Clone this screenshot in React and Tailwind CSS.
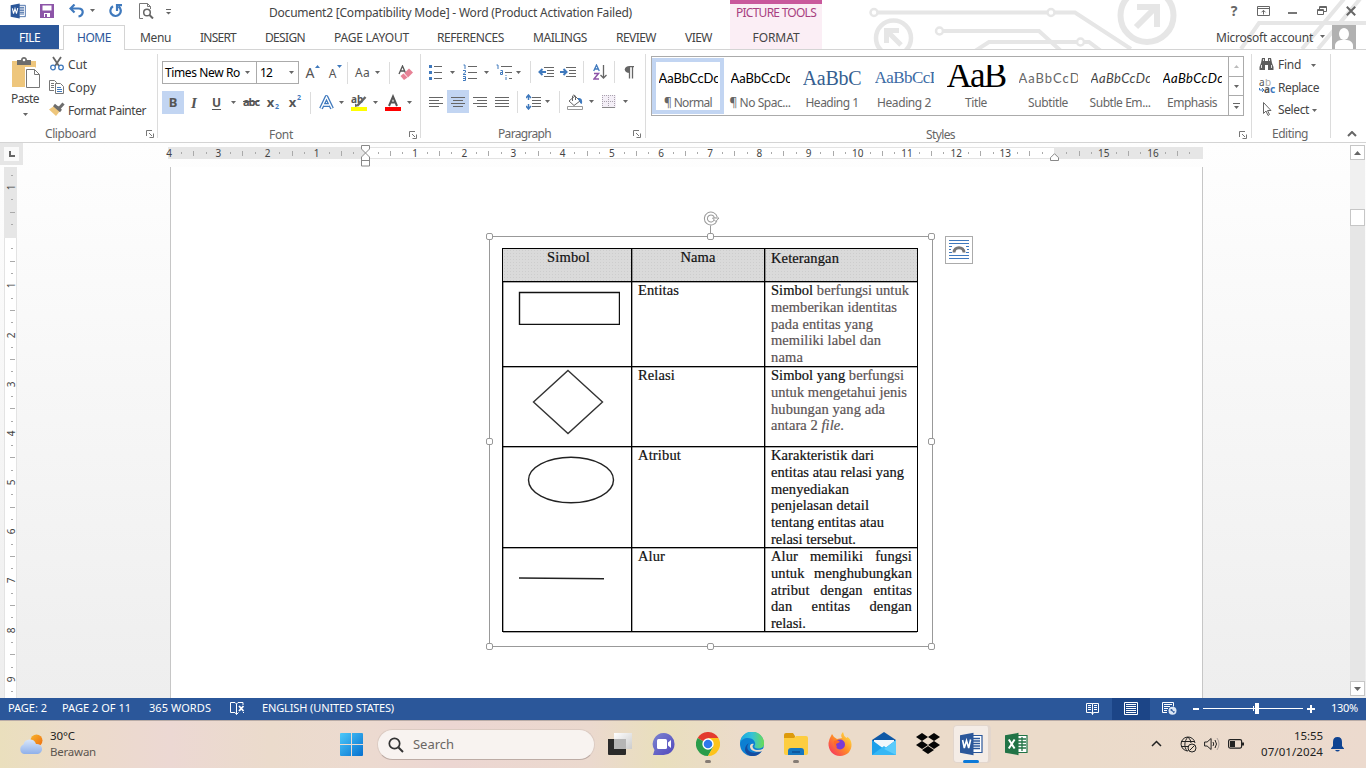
import React, { useLayoutEffect, useRef } from "react";

/* Single line of text whose tracking is adjusted to fill a given width. */
function T({ w, className = "", children }) {
  const ref = useRef(null);
  useLayoutEffect(() => {
    const el = ref.current;
    el.style.letterSpacing = "0px";
    const natural = el.getBoundingClientRect().width;
    el.style.letterSpacing = (w - natural) / el.textContent.length + "px";
  }, [w]);
  return (
    <span ref={ref} className={"inline-block shrink-0 whitespace-pre " + className}>
      {children}
    </span>
  );
}

const Arrow = ({ className = "" }) => (
  <svg className={"h-[3px] w-[5px] shrink-0 " + className} viewBox="0 0 5 3">
    <path d="M0 0h5L2.500 3z" fill="#666" />
  </svg>
);

const Sep = ({ className = "" }) => <div className={"h-[22px] w-px shrink-0 bg-[#dcdcdc] " + className} />;

function Svg({ w, h, className = "", children }) {
  return (
    <svg width={w} height={h} viewBox={`0 0 ${w} ${h}`} className={"shrink-0 " + className} fill="none">
      {children}
    </svg>
  );
}

const Lines = ({ rows, color = "#666" }) => (
  <g stroke={color} strokeWidth="1" shapeRendering="crispEdges">
    {rows.map(([x1, x2, y], i) => (
      <path key={i} d={`M${x1} ${y + 0.5}H${x2}`} />
    ))}
  </g>
);

const Launcher = ({ className = "" }) => (
  <Svg w={8} h={8} className={className}>
    <path d="M.5 6V.5H6M3 3l3 3M7.500 3.500v4h-4" stroke="#777" />
  </Svg>
);

function OfficeIcon({ size, letter, color }) {
  const excel = letter === "X";
  return (
    <svg width={size} height={size} viewBox="0 0 24 24" className="shrink-0" fill="none">
      <path d="M13 3.500h10v17H13z" fill="#fff" stroke={color} strokeWidth="1.200" />
      {excel ? (
        <path d="M14 7h8M14 10h8M14 13h8M14 16h8M18 5v14" stroke={color} strokeWidth="1.300" />
      ) : (
        <path d="M14 6.500h7M14 9h7M14 11.500h7M14 14h7M14 16.500h7" stroke={color} strokeWidth="1.300" />
      )}
      <path d="M1 3.300 14.500.8v22.400L1 20.700z" fill={color} />
      {excel ? (
        <path d="m4.800 7.500 5.800 9M10.600 7.500l-5.800 9" stroke="#fff" strokeWidth="2" />
      ) : (
        <path d="m3.600 8 1.700 8 2.200-7.500L9.700 16l1.900-8.500" stroke="#fff" strokeWidth="1.600" />
      )}
    </svg>
  );
}

function Circuit() {
  return (
    <svg className="absolute left-[866px] top-0 h-[49px] w-[500px]" viewBox="866 0 500 49" fill="none" stroke="#e6e6e6" strokeWidth="4">
      <circle cx="874" cy="12.500" r="3.500" strokeWidth="2.500" />
      <path d="M878 12.500h170M1055 12.500h20L1131 49" />
      <circle cx="1051" cy="12.500" r="3.500" strokeWidth="2.500" />
      <circle cx="939.500" cy="31" r="3.500" strokeWidth="2.500" />
      <path d="M943 31h96l22 20M975 51l14-9h88M1084 42h5l12 9" />
      <circle cx="1080.500" cy="42" r="3.500" strokeWidth="2.500" />
      <circle cx="893.500" cy="38" r="17.500" strokeWidth="4.500" />
      <path d="m901 45-14-14M886.500 43V30.500H899" strokeWidth="5" />
      <circle cx="1147" cy="15.500" r="26.500" fill="#fff" strokeWidth="6" />
      <path d="m1136 27 19-19M1137 7h20v20" strokeWidth="6" />
      <path d="m1241 49 18-26h107M1302 49l42-50M1318 49l42-50" />
    </svg>
  );
}

function TitleBar() {
  return (
    <div className="relative flex h-[25px] items-start">
      <div className="ml-[10px] mt-[3px] flex"><OfficeIcon size={16} letter="W" color="#2b579a" /></div>
      <Svg w={14} h={14} className="ml-[14px] mt-[4px]">
        <path d="M0 0h14v14H0z" fill="#8d55a8" />
        <path d="M2.500 1.500h9v5h-9zM4 9h6v4H4z" fill="#fff" />
        <path d="M5 10h2v4H5z" fill="#8d55a8" />
      </Svg>
      <Svg w={15} h={14} className="ml-[15px] mt-[4px]">
        <path d="M1 4.500h8.500c6 0 5.200 7 0 8M5.500.5l-4 4 4 4" stroke="#3f79bd" strokeWidth="2.200" />
      </Svg>
      <Arrow className="ml-[6px] mt-[9px]" />
      <Svg w={14} h={14} className="ml-[14px] mt-[4px]">
        <path d="M4 2.300a5.200 5.200 0 1 0 5.500.2M8 7V1.200h5" stroke="#3f79bd" strokeWidth="2.200" />
      </Svg>
      <Svg w={15} h={16} className="ml-[16px] mt-[3px]">
        <path d="M4 15.500H.5V.5h8l3 3V6M8.500.5v3h3" stroke="#777" />
        <circle cx="8" cy="9.500" r="3.300" stroke="#666" strokeWidth="1.500" />
        <path d="m10.500 12 3.500 3.500" stroke="#666" strokeWidth="2" />
      </Svg>
      <Svg w={6} h={6} className="ml-[12px] mt-[9px]">
        <path d="M0 .5h5" stroke="#666" /><path d="M0 3h5L2.500 5.500z" fill="#666" />
      </Svg>
      <T w={363} className="ml-[97px] mt-[3px] text-[12px] leading-[20px] text-[#444]">Document2 [Compatibility Mode] - Word (Product Activation Failed)</T>
      <div className="ml-[98px] flex h-[25px] w-[92px] shrink-0 justify-center border-t-4 border-[#c9589c] bg-[#fbeef5]">
        <T w={80} className="mt-[-1px] text-[12px] leading-[20px] text-[#a83e80]">PICTURE TOOLS</T>
      </div>
      <span className="ml-[408px] w-[8px] shrink-0 text-center font-['Noto_Sans'] text-[14px] font-bold leading-[22px] text-[#666]">?</span>
      <Svg w={13} h={10} className="ml-[19px] mt-[6px]">
        <path d="M.5.5h12v9H.5zM.5 2.500h12M6.500 8.500v-4M4.500 6.300l2-2 2 2" stroke="#666" />
      </Svg>
      <div className="ml-[18px] mt-[12px] h-[2px] w-[9px] shrink-0 bg-[#777]" />
      <Svg w={10} h={9} className="ml-[20px] mt-[6px]">
        <path d="M.5 3.500h6v5h-6zM.5 4.500h6M2.500 3V.5h7v5H7M2.500 1.500h7" stroke="#666" />
      </Svg>
      <Svg w={10} h={10} className="ml-[19px] mt-[6px]">
        <path d="m.8.800 8.400 8.400M9.200.8.800 9.200" stroke="#666" strokeWidth="2" />
      </Svg>
    </div>
  );
}

function Tabs() {
  const c = "text-[12px] leading-[26px] text-[#444] ";
  return (
    <div className="relative flex h-[25px] border-b border-[#d4d4d4]">
      <div className="flex w-[59px] justify-center bg-[#2b579a]"><T w={21} className="text-[12px] leading-[26px] text-white">FILE</T></div>
      <div className="ml-[4px] flex h-[25px] w-[62px] shrink-0 justify-center border border-b-0 border-[#d4d4d4] bg-white">
        <T w={34} className="text-[12px] leading-[24px] text-[#2b579a]">HOME</T>
      </div>
      <T w={31} className={c + "ml-[15px]"}>Menu</T>
      <T w={36} className={c + "ml-[29px]"}>INSERT</T>
      <T w={40} className={c + "ml-[29px]"}>DESIGN</T>
      <T w={75} className={c + "ml-[29px]"}>PAGE LAYOUT</T>
      <T w={67} className={c + "ml-[28px]"}>REFERENCES</T>
      <T w={54} className={c + "ml-[29px]"}>MAILINGS</T>
      <T w={40} className={c + "ml-[29px]"}>REVIEW</T>
      <T w={27} className={c + "ml-[29px]"}>VIEW</T>
      <div className="ml-[18px] flex h-[24px] w-[92px] shrink-0 justify-center bg-[#fbeef5]"><T w={47} className={c}>FORMAT</T></div>
      <T w={97} className={c + "ml-[394px]"}>Microsoft account</T>
      <Arrow className="ml-[7px] mt-[10px]" />
      <Svg w={24} h={24} className="ml-[7px]">
        <path d="M0 0h24v24H0z" fill="#b1b1b1" />
        <ellipse cx="12" cy="9" rx="5" ry="6" fill="#fff" />
        <path d="M3 24v-3c0-4 3-5.500 6-6h6c3 .5 6 2 6 6v3z" fill="#fff" />
      </Svg>
    </div>
  );
}

const label = "mt-[3px] text-[12px] leading-[16px] text-[#666] ";

function Clipboard() {
  const t = "text-[12px] leading-[18px] text-[#444] ";
  return (
    <div className="flex w-[157px] shrink-0 flex-col">
      <div className="flex h-[74px]">
        <div className="flex w-[50px] flex-col items-center">
          <Svg w={30} h={32} className="ml-[2px] mt-[7px]">
            <path d="M1 4h24v26H1z" fill="#eec67c" />
            <path d="M6 3h4c0-4 6-4 6 0h4v5H6z" fill="#6d6d6d" />
            <circle cx="13" cy="3" r="1.300" fill="#fff" />
            <path d="M14 10h10l6 6v16H14z" fill="#fff" />
            <path d="M15.500 12.500h8l5 5v13h-13zM23.500 12.500v5h5" fill="#fff" stroke="#777" />
          </Svg>
          <T w={28} className={t + "mt-px"}>Paste</T>
          <Arrow className="mt-[5px]" />
        </div>
        <div className="flex flex-col pt-[6px]">
          <div className="flex h-[23px] items-start">
            <Svg w={14} h={15} className="mr-[4px]">
              <path d="m3 1 6 9M11 1 5 10" stroke="#666" strokeWidth="1.800" />
              <circle cx="3" cy="11.500" r="2.300" stroke="#3f79bd" strokeWidth="1.300" />
              <circle cx="11" cy="11.500" r="2.300" stroke="#3f79bd" strokeWidth="1.300" />
            </Svg>
            <T w={19} className={t}>Cut</T>
          </div>
          <div className="flex h-[23px] items-start">
            <Svg w={15} h={14} className="mr-[4px] mt-[1px] -ml-px">
              <path d="M5 10.500H.5V.5h5l2 2V4M2 3.500h3M2 5.500h3M2 7.500h3" stroke="#777" />
              <path d="M6.500 3.500h5l3 3v7h-8z" fill="#fff" stroke="#777" />
              <path d="M8 7.500h4M8 9.500h5M8 11.500h5" stroke="#3f79bd" />
            </Svg>
            <T w={28} className={t}>Copy</T>
          </div>
          <div className="flex h-[20px] items-start">
            <Svg w={16} h={14} className="mr-[3px] -ml-px">
              <path d="M0 7.500 5 4l6 5-4 5z" fill="#eec67c" />
              <path d="m5 3 7 6M8 5l2 1.500 4.500-5" stroke="#6d6d6d" strokeWidth="3" />
            </Svg>
            <T w={78} className={t}>Format Painter</T>
          </div>
        </div>
      </div>
      <div className="flex items-start">
        <T w={51} className={label + "ml-[45px]"}>Clipboard</T>
        <Launcher className="ml-[50px] mt-[7px]" />
      </div>
    </div>
  );
}

const btn = "shrink-0 text-center font-['Noto_Sans'] text-[#555] ";

function FontGroup() {
  return (
    <div className="flex w-[262px] shrink-0 flex-col pl-[4px]">
      <div className="mt-[11px] flex h-[23px] items-center">
        <div className="flex h-[23px] w-[95px] shrink-0 items-center border border-[#ababab]">
          <T w={75} className="ml-[2px] text-[12px] leading-[20px] text-black">Times New Ro</T><Arrow className="ml-[5px]" />
        </div>
        <div className="-ml-px flex h-[23px] w-[43px] shrink-0 items-center border border-[#ababab]">
          <T w={12} className="ml-[3px] text-[12px] leading-[20px] text-black">12</T><Arrow className="ml-[17px]" />
        </div>
        <span className={btn + "ml-[6px] w-[10px] text-[14px] leading-[22px]"}>A</span>
        <svg className="mb-[12px] h-[3px] w-[5px]" viewBox="0 0 5 3"><path d="M0 3h5L2.500 0z" fill="#3f79bd" /></svg>
        <span className={btn + "ml-[8px] w-[9px] pt-[2px] text-[12px] leading-[20px]"}>A</span>
        <svg className="mb-[12px] h-[3px] w-[5px]" viewBox="0 0 5 3"><path d="M0 0h5L2.500 3z" fill="#3f79bd" /></svg>
        <Sep className="ml-[5px]" />
        <T w={15} className="ml-[7px] text-[12px] text-[#555]">Aa</T><Arrow className="ml-[5px]" />
        <Sep className="ml-[9px]" />
        <Svg w={15} h={16} className="ml-[8px]">
          <path d="m1 9 3.500-8L8 9M2.500 6h4" stroke="#555" strokeWidth="1.300" />
          <path d="m6.500 8 4.500-4.500 4 4-5 5z" fill="#e78296" /><path d="m2.500 11 3-2.500 4 4-3.500 2.500z" fill="#e78296" />
        </Svg>
      </div>
      <div className="mt-[7px] flex h-[23px] items-center">
        <span className={btn + "w-[22px] bg-[#c2d5f2] text-[13px] font-bold leading-[23px]"}>B</span>
        <span className="ml-[4px] w-[12px] text-center font-['Liberation_Serif'] text-[15px] font-bold italic leading-[20px] text-[#555]">I</span>
        <span className={btn + "ml-[11px] w-[11px] text-[12px] font-bold leading-[20px] underline underline-offset-2"}>U</span>
        <Arrow className="ml-[9px]" />
        <T w={16} className="ml-[7px] text-[11px] font-bold text-[#555] line-through">abc</T>
        <span className={btn + "ml-[7px] w-[9px] text-[13px] font-bold"}>x</span><span className="mt-[9px] w-[5px] text-[7px] font-bold text-[#3f79bd]">2</span>
        <span className={btn + "ml-[8px] w-[9px] text-[13px] font-bold"}>x</span><span className="mb-[9px] w-[5px] text-[7px] font-bold text-[#3f79bd]">2</span>
        <Sep className="ml-[8px]" />
        <Svg w={15} h={16} className="ml-[8px]">
          <path d="M2 13.500 7.500 2 13 13.500M4.500 10h6" stroke="#3f79bd" strokeWidth="4" strokeLinejoin="round" />
          <path d="M2 13.500 7.500 2 13 13.500M4.500 10h6" stroke="#fff" strokeWidth="1.400" />
        </Svg>
        <Arrow className="ml-[5px]" />
        <Svg w={17} h={17} className="ml-[7px]">
          <text x="0" y="9" fontSize="10" fontWeight="bold" fill="#555" fontFamily="Noto Sans">ab</text>
          <path d="m14.500 3-8 8.500" stroke="#666" strokeWidth="2.500" /><path d="M4 9.500 8 12l-4 1z" fill="#666" />
          <path d="M0 13h16v4H0z" fill="#ff0" />
        </Svg>
        <Arrow className="ml-[5px]" />
        <Svg w={16} h={17} className="ml-[7px]">
          <path d="M4 12 8 2.500 12 12M5.500 8.500h5" stroke="#555" strokeWidth="2" />
          <path d="M0 13h16v4H0z" fill="red" />
        </Svg>
        <Arrow className="ml-[6px]" />
      </div>
      <div className="mt-[10px] flex items-start">
        <T w={24} className={label + "ml-[107px]"}>Font</T>
        <Launcher className="ml-[116px] mt-[7px]" />
      </div>
    </div>
  );
}

function Paragraph() {
  return (
    <div className="flex w-[224px] shrink-0 flex-col pl-[8px]">
      <div className="mt-[11px] flex h-[23px] items-center">
        <Svg w={14} h={16}>
          <Lines rows={[[5, 13, 2], [5, 13, 8], [5, 13, 14]]} />
          <path d="M0 1h3v3H0zM0 7h3v3H0zM0 13h3v3H0z" fill="#3f79bd" />
        </Svg>
        <Arrow className="ml-[7px]" />
        <Svg w={15} h={17} className="ml-[8px]">
          <Lines rows={[[5, 14, 2], [5, 14, 8], [5, 14, 14]]} />
          <path d="M.5 1H2v4M0 6.500h2.500V8L0 10.500h3M0 12.500h2.500v4H0M0 14.500h2" stroke="#3f79bd" />
        </Svg>
        <Arrow className="ml-[6px]" />
        <Svg w={17} h={16} className="ml-[7px]">
          <Lines rows={[[5, 16, 2], [9, 16, 8], [13, 16, 14]]} />
          <path d="M.5 1H2v4M4.500 6.500h2v4h-2v-2h2M10 11v1M10 13v3" stroke="#3f79bd" />
        </Svg>
        <Arrow className="ml-[3px]" />
        <Sep className="ml-[9px]" />
        <Svg w={16} h={12} className="ml-[7px]">
          <Lines rows={[[6, 16, 1], [9, 16, 4], [9, 16, 7], [6, 16, 10]]} />
          <path d="M8 6H2M4.500 3 1.500 6l3 3" stroke="#3f79bd" strokeWidth="2" />
        </Svg>
        <Svg w={16} h={12} className="ml-[6px]">
          <Lines rows={[[6, 16, 1], [9, 16, 4], [9, 16, 7], [6, 16, 10]]} />
          <path d="M0 6h6M3.500 3l3 3-3 3" stroke="#3f79bd" strokeWidth="2" />
        </Svg>
        <Sep className="ml-[7px]" />
        <Svg w={14} h={16} className="ml-[9px]">
          <path d="M.7 7 3.500 1l2.800 6M1.500 5h4" stroke="#3f79bd" strokeWidth="1.300" />
          <path d="M1 9.500h4.500L1 15h5" stroke="#8d55a8" strokeWidth="1.500" />
          <path d="M10.500 1v13M7.500 11l3 3 3-3" stroke="#666" strokeWidth="1.300" />
        </Svg>
        <Sep className="ml-[7px]" />
        <Svg w={11} h={13} className="ml-[9px]">
          <path d="M5 .5h5M5.500 0v12.500M8.500 0v12.500" stroke="#666" strokeWidth="1.300" /><path d="M6 0v7C-1 7-1 0 6 0z" fill="#666" />
        </Svg>
      </div>
      <div className="mt-[7px] flex h-[23px] items-center">
        <Svg w={14} h={12}><Lines rows={[[0, 14, 1], [0, 10, 4], [0, 14, 7], [0, 10, 10]]} /></Svg>
        <div className="ml-[4px] flex h-[23px] w-[22px] items-center justify-center bg-[#c2d5f2]">
          <Svg w={14} h={12}><Lines rows={[[0, 14, 1], [2, 12, 4], [0, 14, 7], [2, 12, 10]]} /></Svg>
        </div>
        <Svg w={14} h={12} className="ml-[4px]"><Lines rows={[[0, 14, 1], [4, 14, 4], [0, 14, 7], [4, 14, 10]]} /></Svg>
        <Svg w={14} h={12} className="ml-[8px]"><Lines rows={[[0, 14, 1], [0, 14, 4], [0, 14, 7], [0, 14, 10]]} /></Svg>
        <Sep className="ml-[8px]" />
        <Svg w={15} h={16} className="ml-[8px]">
          <Lines rows={[[6, 15, 3], [6, 15, 6], [6, 15, 9], [6, 15, 12]]} />
          <path d="M2.500 1v5M2.500 15v-5M0 4l2.500-3L5 4M0 12l2.500 3L5 12" stroke="#3f79bd" strokeWidth="1.500" />
        </Svg>
        <Arrow className="ml-[4px]" />
        <Sep className="ml-[9px]" />
        <Svg w={17} h={16} className="ml-[7px]">
          <path d="m2 7 6-5 5 5-6 4.500zM5.500 7V2q1-2 3 0v4" stroke="#666" />
          <path d="M11 4q5-1 4 6l-2-1q0-3-2-3z" fill="#3f79bd" />
          <path d="M.5 12.500h15v3H.5z" fill="#fff" stroke="#999" />
        </Svg>
        <Arrow className="ml-[5px]" />
        <Svg w={14} h={14} className="ml-[8px]">
          <path d="M0 0h14v13H0z" fill="#f4eff7" />
          <path d="M.5 0v13M6.500 0v13M12.500 0v13M0 .5h13M0 6.500h13" stroke="#a9a2ad" strokeDasharray="1 1" />
          <path d="M0 12.500h13" stroke="#888" />
        </Svg>
        <Arrow className="ml-[7px]" />
      </div>
      <div className="mt-[10px] flex items-start">
        <T w={53} className={label + "ml-[69px]"}>Paragraph</T>
        <Launcher className="ml-[82px] mt-[7px]" />
      </div>
    </div>
  );
}

const calibri = "font-['Lato'] text-[13px] leading-[20px] ";
const cambria = "font-['Liberation_Serif'] ";
const styles = [
  { name: "¶ Normal", nw: 48, s: "AaBbCcDc", w: 61, c: calibri + "text-black", on: true },
  { name: "¶ No Spac...", nw: 61, s: "AaBbCcDc", w: 61, c: calibri + "text-black" },
  { name: "Heading 1", nw: 53, s: "AaBbC", w: 59, c: cambria + "text-[20px] leading-[20px] text-[#365f91]" },
  { name: "Heading 2", nw: 54, s: "AaBbCcD", w: 67, c: cambria + "text-[17px] leading-[20px] text-[#3c6ba5]" },
  { name: "Title", nw: 22, s: "AaB", w: 59, c: cambria + "text-[35px] leading-[14px] -mt-[5px] text-black" },
  { name: "Subtitle", nw: 40, s: "AaBbCcD", w: 62, c: calibri + "text-[#666]" },
  { name: "Subtle Em...", nw: 61, s: "AaBbCcDc", w: 61, c: calibri + "italic text-[#444]" },
  { name: "Emphasis", nw: 50, s: "AaBbCcDc", w: 61, c: calibri + "italic text-black" },
];

function Styles() {
  return (
    <div className="flex w-[605px] shrink-0 flex-col pl-[5px]">
      <div className="mt-[6px] flex h-[60px] w-[593px] border border-[#ababab]">
        {styles.map((st) => (
          <div key={st.name} className={"mt-px flex h-[56px] w-[72px] shrink-0 flex-col items-center " + (st.on ? "border-4 border-[#c2d5f2] pt-[3px]" : "pt-[7px]")}>
            <div className="flex h-[26px] w-[59px] shrink-0 items-center overflow-hidden">
              <T w={st.w} className={st.c}>{st.s}</T>
            </div>
            <T w={st.nw} className="mt-[4px] text-[12px] leading-[16px] text-[#666]">{st.name}</T>
          </div>
        ))}
        <div className="flex w-[15px] flex-col border-l border-[#ababab]">
          <div className="flex h-[20px] items-center justify-center border-b border-[#ababab]"><svg width="5" height="3" viewBox="0 0 5 3"><path d="M0 3h5L2.500 0z" fill="#bbb" /></svg></div>
          <div className="flex h-[19px] items-center justify-center border-b border-[#ababab]"><Arrow /></div>
          <div className="flex h-[19px] flex-col items-center justify-center gap-[2px]"><div className="h-px w-[7px] bg-[#666]" /><Arrow /></div>
        </div>
      </div>
      <div className="mt-[8px] flex items-start">
        <T w={29} className={label + "ml-[275px]"}>Styles</T>
        <Launcher className="ml-[284px] mt-[7px]" />
      </div>
    </div>
  );
}

function Editing() {
  const t = "text-[12px] leading-[18px] text-[#444] ";
  return (
    <div className="flex w-[78px] shrink-0 flex-col pl-[7px] pt-[6px]">
      <div className="flex h-[23px] items-start">
        <Svg w={15} h={14} className="mt-[1px]">
          <path d="M3 1h3v3h3V1h3l1 5 1.500 4v3H9V8H6v5H.5v-3L2 6z" fill="#5c5c5c" />
          <path d="M4.500 2v2M10.500 2v2M2.500 8v3M12.500 8v3" stroke="#ddd" />
        </Svg>
        <T w={23} className={t + "ml-[4px]"}>Find</T><Arrow className="ml-[10px] mt-[8px]" />
      </div>
      <div className="flex h-[23px] items-start">
        <Svg w={17} h={16}>
          <text x="0" y="7" fontSize="10" fill="#555" fontFamily="Noto Sans">a</text><text x="6" y="7" fontSize="10" fill="#aaa" fontFamily="Noto Sans">b</text>
          <text x="5" y="14" fontSize="10" fontWeight="bold" fill="#555" fontFamily="Noto Sans">a</text><text x="11" y="14" fontSize="10" fontWeight="bold" fill="#3f79bd" fontFamily="Noto Sans">c</text>
          <path d="M.5 9v2h4M3 9l2 2-2 2" stroke="#3f79bd" />
        </Svg>
        <T w={41} className={t + "ml-[2px]"}>Replace</T>
      </div>
      <div className="flex h-[22px] items-start">
        <Svg w={9} h={14} className="ml-[4px] mt-[1px]"><path d="M.5.5v11l2.500-2.500 2 4.500 1.500-1-2-4H8z" stroke="#666" /></Svg>
        <T w={31} className={t + "ml-[6px]"}>Select</T><Arrow className="ml-[3px] mt-[8px]" />
      </div>
      <T w={36} className={label + "ml-[13px] self-start"}>Editing</T>
    </div>
  );
}

const GroupSep = () => <div className="mt-[4px] h-[84px] w-px shrink-0 bg-[#dcdcdc]" />;

function Ribbon() {
  return (
    <div className="flex h-[93px] border-b border-[#d4d4d4] bg-white">
      <Clipboard /><GroupSep /><FontGroup /><GroupSep /><Paragraph /><GroupSep /><Styles /><GroupSep /><Editing /><GroupSep />
      <Svg w={10} h={6} className="ml-[16px] mt-[81px]"><path d="m1 5 4-4 4 4" stroke="#666" strokeWidth="2" /></Svg>
    </div>
  );
}

function Tick({ i, zero, hide, vertical }) {
  const r = ((i % 4) + 4) % 4;
  const n = Math.abs(i / 4);
  if (r === 0) {
    if (n === zero || n === hide) return null;
    return <span className={"font-['Noto_Sans'] text-[10px] leading-[11px] text-[#444] " + (vertical ? "-rotate-90" : "")}>{n}</span>;
  }
  if (vertical) return <div className={r === 2 ? "h-px w-[5px] bg-[#aaa]" : "h-px w-[2px] bg-[#aaa]"} />;
  return <div className={r === 2 ? "h-[5px] w-px bg-[#aaa]" : "h-[2px] w-px bg-[#aaa]"} />;
}

function HRuler() {
  return (
    <div className="flex h-[24px]">
      <div className="flex h-[22px] w-[23px] shrink-0 items-center justify-center bg-[#e6e6e6]">
        <div className="flex h-[14px] w-[15px] items-center justify-center bg-[#fafafa]"><Svg w={6} h={6}><path d="M1 0v5h5" stroke="#666" strokeWidth="2" /></Svg></div>
      </div>
      <div className="relative ml-[145px] mt-[4px] flex h-[12px] w-[1035px] shrink-0">
        <div className="w-[197px] bg-[#e6e6e6]" />
        <div className="w-[689px] border-y border-[#e3e3e3] bg-white" />
        <div className="w-[149px] bg-[#e6e6e6]" />
        <div className="absolute -left-[5px] top-0 flex h-[12px]">
          {Array.from({ length: 84 }, (_, k) => (
            <div key={k} className="flex h-[12px] w-[12.3px] shrink-0 items-center justify-center"><Tick i={k - 16} zero={0} hide={14} /></div>
          ))}
        </div>
        <Svg w={9} h={22} className="absolute left-[193px] top-[-2px]">
          <path d="M.5.500h8V4l-4 4 4 4v9h-8v-9l4-4-4-4zM.5 15.500h8" fill="#fff" stroke="#888" />
        </Svg>
        <Svg w={9} h={8} className="absolute left-[882px] top-[6px]"><path d="m4.500.7 4 4V7.500h-8V4.700z" fill="#fff" stroke="#888" /></Svg>
      </div>
    </div>
  );
}

function VRuler() {
  return (
    <div className="relative ml-[4px] flex h-[531px] w-[13px] shrink-0 flex-col overflow-hidden">
      <div className="h-[71px] shrink-0 bg-[#e6e6e6]" />
      <div className="grow border-x border-[#e3e3e3] bg-white" />
      <div className="absolute left-px top-[2px] flex w-[14px] flex-col">
        {Array.from({ length: 43 }, (_, k) => (
          <div key={k} className="flex h-[12.3px] shrink-0 items-center justify-center"><Tick i={k - 5} zero={0} vertical /></div>
        ))}
      </div>
    </div>
  );
}

const serif = "font-['Liberation_Serif'] text-[14.500px] leading-[16.750px] text-[#111] [-webkit-text-stroke:0.200px] ";
function Ln({ w, children, grey }) {
  return <T w={w} className={serif + "self-start " + (grey ? "!text-[#5a5354]" : "")}>{children}</T>;
}
const D = ({ children }) => <span className="text-[#111]">{children}</span>;

const colLine = "border-l border-black shadow-[inset_1px_0_0_#00000055] ";

function Row({ h, shape, name, nw, children }) {
  return (
    <div className={"flex border-b border-black shadow-[0_1px_0_#00000055] " + h}>
      <div className="w-[128px] shrink-0">{shape}</div>
      <div className={"flex w-[133px] shrink-0 pl-[6px] " + colLine}><Ln w={nw}>{name}</Ln></div>
      <div className={"flex grow flex-col pl-[6px] " + colLine}>{children}</div>
    </div>
  );
}

const hdr = "bg-[#dadada] bg-[radial-gradient(#cdcdcd_0.6px,transparent_0.9px)] bg-[size:3px_3px] ";
const Handle = ({ className }) => <div className={"absolute h-[7px] w-[7px] rounded-[2px] border border-[#999] bg-white " + className} />;

function Picture() {
  return (
    <div className="relative ml-[318px] mt-[69px] h-[411px] w-[444px] shrink-0 border border-[#999] pl-[12px] pt-[11px]">
      <div className="flex w-[416px] flex-col border-x border-t border-black shadow-[inset_1px_0_0_#00000055]">
        <div className="flex h-[33px] border-b border-black shadow-[0_1px_0_#00000055]">
          <div className={hdr + "flex w-[128px] justify-center pl-[3px]"}><Ln w={43}>Simbol</Ln></div>
          <div className={hdr + colLine + "flex w-[133px] justify-center"}><Ln w={35}>Nama</Ln></div>
          <div className={hdr + colLine + "flex grow pl-[6px] pt-[1px]"}><Ln w={68}>Keterangan</Ln></div>
        </div>
        <Row h="h-[85px]" name="Entitas" nw={41} shape={<Svg w={102} h={34} className="ml-[15px] mt-[9px]"><path d="M1.500 1.500h100v32h-100z" stroke="#111" strokeWidth="1.400" /></Svg>}>
          <Ln w={138} grey><D>Simbol</D> berfungsi untuk</Ln>
          <Ln w={126} grey>memberikan identitas</Ln>
          <Ln w={102} grey>pada entitas yang</Ln>
          <Ln w={110} grey>memiliki label dan</Ln>
          <Ln w={32} grey>nama</Ln>
        </Row>
        <Row h="h-[80px]" name="Relasi" nw={37} shape={<Svg w={72} h={66} className="ml-[29px] mt-[2px]"><path d="m36 1.500 34.500 31.500L36 64.500 1.500 33z" stroke="#333" strokeWidth="1.400" /></Svg>}>
          <Ln w={133} grey><D>Simbol yang</D> berfungsi</Ln>
          <Ln w={136} grey>untuk mengetahui jenis</Ln>
          <Ln w={114} grey>hubungan yang ada</Ln>
          <Ln w={73} grey>antara 2 <i>file</i>.</Ln>
        </Row>
        <Row h="h-[101px]" name="Atribut" nw={43} shape={<Svg w={88} h={50} className="ml-[24px] mt-[8px]"><ellipse cx="44" cy="25" rx="42.500" ry="22.800" stroke="#222" strokeWidth="1.400" /></Svg>}>
          <Ln w={103}>Karakteristik dari</Ln>
          <Ln w={133}>entitas atau relasi yang</Ln>
          <Ln w={78}>menyediakan</Ln>
          <Ln w={98}>penjelasan detail</Ln>
          <Ln w={113}>tentang entitas atau</Ln>
          <Ln w={85}>relasi tersebut.</Ln>
        </Row>
        <Row h="h-[84px]" name="Alur" nw={27} shape={<Svg w={88} h={5} className="ml-[15px] mt-[28px]"><path d="m1 2 85 .8" stroke="#222" strokeWidth="1.500" /></Svg>}>
          {["Alur memiliki fungsi", "untuk menghubungkan", "atribut dengan entitas", "dan entitas dengan"].map((l) => (
            <div key={l} className={serif + "flex w-[141px] justify-between tracking-[0.100px]"}>{l.split(" ").map((x) => <span key={x}>{x}</span>)}</div>
          ))}
          <Ln w={35}>relasi.</Ln>
        </Row>
      </div>
      <Handle className="-left-[4px] -top-[4px]" /><Handle className="left-[217px] -top-[4px]" /><Handle className="left-[438px] -top-[4px]" />
      <Handle className="-left-[4px] top-[201px]" /><Handle className="left-[438px] top-[201px]" />
      <Handle className="-left-[4px] top-[406px]" /><Handle className="left-[217px] top-[406px]" /><Handle className="left-[438px] top-[406px]" />
      <Svg w={18} h={26} className="absolute left-[213px] top-[-26px]">
        <path d="M7.500 14.500v8" stroke="#999" />
        <path d="M12.500 9.500a5 5 0 1 1 .3-3" stroke="#999" strokeWidth="4" /><path d="M12.500 9.500a5 5 0 1 1 .3-3" stroke="#fff" strokeWidth="2" />
        <path d="M9.500 7h6.500L12.800 10.500z" fill="#fff" stroke="#999" />
      </Svg>
      <div className="absolute left-[455px] top-[-1px] flex h-[28px] w-[28px] items-center justify-center border border-[#ababab] bg-white">
        <Svg w={20} h={20}>
          <path d="M0 .5h20M0 3.500h20M0 15.500h20M0 18.500h20M0 6.500h3M17 6.500h3M0 9.500h2M18 9.500h2M0 12.500h3M17 12.500h3" stroke="#3f79bd" />
          <path d="M5 12.500c0-6.500 10-6.500 10 0" stroke="#777" strokeWidth="3" />
        </Svg>
      </div>
    </div>
  );
}

function Workspace() {
  return (
    <div className="flex h-[555px] bg-linear-to-b from-[#fefefe] to-[#eeeeee]">
      <div className="flex w-[1350px] shrink-0 flex-col">
        <HRuler />
        <div className="flex h-[531px]">
          <VRuler />
          <div className="ml-[153px] flex w-[1033px] shrink-0 border-x border-[#c6c6c6] bg-white"><Picture /></div>
        </div>
      </div>
      <div className="mt-[2px] flex h-[551px] w-[15px] flex-col bg-[#f0f0f0]">
        <div className="flex h-[15px] items-center justify-center border border-[#c6c6c6] bg-white"><svg width="7" height="4" viewBox="0 0 7 4"><path d="M0 4h7L3.500 0z" fill="#666" /></svg></div>
        <div className="mt-[49px] h-[17px] border border-[#c6c6c6] bg-white" />
        <div className="grow bg-[#e6e6e6]" />
        <div className="flex h-[15px] items-center justify-center border border-[#c6c6c6] bg-white"><svg width="7" height="4" viewBox="0 0 7 4"><path d="M0 0h7L3.500 4z" fill="#666" /></svg></div>
      </div>
    </div>
  );
}

function StatusBar() {
  const t = "-mt-[2px] text-[11px] leading-[20px] ";
  return (
    <div className="flex h-[22px] items-center bg-[#2b579a] text-white">
      <T w={39} className={t + "ml-[8px]"}>PAGE: 2</T>
      <T w={69} className={t + "ml-[15px]"}>PAGE 2 OF 11</T>
      <T w={62} className={t + "ml-[18px]"}>365 WORDS</T>
      <Svg w={15} h={13} className="-mt-[2px] ml-[19px]">
        <path d="M6.500 12.500V2L5 .5H.5v10H5l1.500 2 2-2M6.500 2 8 .5h5V3M13.500 10v1" stroke="#fff" /><path d="m9 4 4.500 5M13.500 4 9 9" stroke="#fff" strokeWidth="1.800" />
      </Svg>
      <T w={132} className={t + "ml-[17px]"}>ENGLISH (UNITED STATES)</T>
      <Svg w={13} h={13} className="ml-[692px] -mt-px">
        <path d="M6.500 12.500V1.500M6.500 1.500h-6v9h5l1 2 1-2h5v-9h-6M2 3.500h3M2 5.500h3M2 7.500h3M8 3.500h3M8 5.500h3M8 7.500h3" stroke="#fff" />
      </Svg>
      <div className="ml-[13px] flex h-[22px] w-[38px] items-center justify-center bg-[#1c4587]">
        <Svg w={14} h={13} className="-mt-px"><path d="M.5.500h13v12H.5zM2 2.500h10M2 4.500h10M2 6.500h10M2 8.500h10M2 10.500h10" stroke="#fff" /></Svg>
      </div>
      <Svg w={15} h={13} className="ml-[12px] -mt-px">
        <path d="M5 10.500H.5V.5h11v4M2 2.500h8M2 4.500h6M2 6.500h4M2 8.500h3" stroke="#fff" /><circle cx="10.500" cy="8.800" r="4" fill="#dbe6f5" /><path d="M8 8q2-2 2.500 0t2.500 1l-1 2q-1 0-1-1z" fill="#2b579a" />
      </Svg>
      <div className="ml-[16px] h-[2px] w-[6px] bg-white" />
      <div className="relative ml-[4px] -mt-px h-px w-[100px] bg-white"><div className="absolute left-[50px] -top-[2px] h-[5px] w-px bg-white" /><div className="absolute left-[52px] -top-[5px] h-[11px] w-[4px] bg-white" /></div>
      <Svg w={8} h={8} className="ml-[4px]"><path d="M4 0v8M0 4h8" stroke="#fff" strokeWidth="2" /></Svg>
      <T w={27} className={t + "ml-[16px]"}>130%</T>
    </div>
  );
}

const App24 = ({ children, className = "", mark = "" }) => (
  <div className={"flex h-[47px] w-[44px] shrink-0 flex-col items-center pt-[11px] " + className}>
    <svg width="24" height="24" viewBox="0 0 24 24" fill="none" className="shrink-0">{children}</svg>
    {mark && <div className={"mt-[4px] h-[3px] shrink-0 rounded-full " + mark} />}
  </div>
);

function Taskbar() {
  return (
    <div className="flex h-[48px] border-t border-[#b9aca7] bg-[linear-gradient(90deg,#eadfbd_0px,#ecdbc9_70px,#ecd8d3_170px,#ebdbcc_270px,#ecdad0_370px,#ecd6d2_450px,#ebd9ce_590px,#e9dfbd_660px,#ebdbca_740px,#ebdbca_1080px,#ecdace_1366px)]">
      <Svg w={25} h={21} className="ml-[19px] mt-[13px]">
        <defs><linearGradient id="cl" x2="0" y2="1"><stop stopColor="#d8e6fa" /><stop offset="1" stopColor="#8fb0ea" /></linearGradient><linearGradient id="su" x2="1" y2="1"><stop stopColor="#f7b52c" /><stop offset="1" stopColor="#ee6c10" /></linearGradient></defs>
        <circle cx="17.500" cy="6.500" r="6" fill="url(#su)" />
        <path d="M5 20a5 5 0 0 1-.5-9.500A6.500 6.500 0 0 1 17 10a5 5 0 1 1 2 10z" fill="url(#cl)" />
      </Svg>
      <div className="ml-[6px] flex w-[290px] shrink-0 flex-col items-start pt-[7px]">
        <T w={25} className="text-[11.500px] leading-[16px] text-[#222]">30°C</T><T w={46} className="text-[11.500px] leading-[16px] text-[#5c5650]">Berawan</T>
      </div>
      <Svg w={23} h={23} className="mt-[12px]">
        <defs><linearGradient id="wi" x2="1" y2="1"><stop stopColor="#4cc9fa" /><stop offset="1" stopColor="#0670cf" /></linearGradient></defs>
        <path d="M0 1q0-1 1-1h10v11H0zM12 0h10q1 0 1 1v10H12zM0 12h11v11H1q-1 0-1-1zM12 12h11v10q0 1-1 1H12z" fill="url(#wi)" />
      </Svg>
      <div className="ml-[14px] mt-[8px] flex h-[31px] w-[218px] shrink-0 items-center rounded-full border border-[#dccbc2] border-b-[#bdaca5] bg-[#f8f3f0]">
        <Svg w={16} h={16} className="ml-[10px]"><circle cx="6.500" cy="6.500" r="5.200" stroke="#333" strokeWidth="1.700" /><path d="m10.500 10.500 4.500 4.500" stroke="#333" strokeWidth="2" /></Svg>
        <T w={41} className="-mt-px ml-[9px] text-[13px] leading-[20px] text-[#6a6663]">Search</T>
      </div>
      <App24 className="ml-[3px]">
        <defs><linearGradient id="tv" x2="1" y2="1"><stop stopColor="#fff" /><stop offset="1" stopColor="#ccc" /></linearGradient></defs>
        <path d="M0 7h18v15q0 1-1 1H1q-1 0-1-1z" fill="#2a2a2a" /><path d="M6 1h18v16H6z" fill="url(#tv)" /><path d="M6 7h12v10H6z" fill="#b5b5b5" />
      </App24>
      <App24>
        <defs><linearGradient id="ch" x2="1" y2="1"><stop stopColor="#7d85d0" /><stop offset="1" stopColor="#5047bd" /></linearGradient></defs>
        <path d="M12 1a11 11 0 1 1-1 22H1l1.500-5A11 11 0 0 1 12 1z" fill="url(#ch)" /><rect x="5" y="7" width="10" height="10" rx="1.500" fill="#fff" /><path d="m16 10.500 3-2.500v8l-3-2.500z" fill="#fff" />
      </App24>
      <App24 mark="w-[6px] bg-[#857c74]">
        <path d="M12 12 1.600 6A12 12 0 0 1 22.400 6z" fill="#e33b2e" /><path d="M12 12 1.600 6A12 12 0 0 0 12 24l5.200-9z" fill="#2a9d4a" /><path d="M12 12V6h10.400A12 12 0 0 1 12 24l5.200-9z" fill="#fdc31a" />
        <circle cx="12" cy="12" r="5.700" fill="#fff" /><circle cx="12" cy="12" r="4.300" fill="#2e78ea" />
      </App24>
      <App24>
        <defs><linearGradient id="ed" x2="1"><stop stopColor="#18a7df" /><stop offset=".5" stopColor="#35c1d8" /><stop offset="1" stopColor="#69dc54" /></linearGradient></defs>
        <circle cx="12" cy="12" r="12" fill="#0c7fd2" />
        <path d="M0 11A12 12 0 0 1 24 12c0 4-4 5-7 4.500-3-.5-3-2-2-3.500 1-3-2-7-7-7-4 0-7 2-8 5z" fill="url(#ed)" />
        <path d="M9 11c-5 6 1 13 13 8a12 12 0 0 1-12 4.800C3 21 4 14 9 11z" fill="#164c9f" />
        <path d="M14 12c-3 2-1 6 3 6q4 0 6.500-1.500L26 14v6l-4-.8c-7 2-12-1.200-12-4.700 0-2 1.500-3.500 4-2.500z" fill="#ebdbca" />
      </App24>
      <App24 mark="w-[6px] bg-[#857c74]">
        <path d="M0 3q0-2 2-2h7l2 3v5H0z" fill="#dd9a0c" /><path d="M0 6h10l2-2h10q2 0 2 2v15q0 2-2 2H2q-2 0-2-2z" fill="#fdcd40" /><path d="M4 23v-4q0-3 3-3h10q3 0 3 3v4z" fill="#1576bf" /><path d="M8 20h8" stroke="#0c4f94" strokeWidth="1.500" />
      </App24>
      <App24>
        <defs><linearGradient id="fx" x1="1" x2="0" y2="1"><stop stopColor="#fff04a" /><stop offset=".5" stopColor="#ff8a28" /><stop offset="1" stopColor="#f5246c" /></linearGradient></defs>
        <path d="M15 0q-3 3-1 6L9 7 6 5 4 2q-3 5-3.500 9C0 18 5 24 12 24s12-5 11.500-12q-.5-5-4-7l-1 1q-3-2-3.500-6z" fill="url(#fx)" /><circle cx="12" cy="12.500" r="5" fill="#7b3bd6" /><path d="M6 9q4-2 6 1l-4 2 1 4q-4-2-3-7z" fill="#ff6a28" />
      </App24>
      <App24>
        <path d="M0 8 12 0l12 8v2H0z" fill="#0f59a6" /><path d="M2 8h20v9H2z" fill="#f3f7fb" /><path d="m0 8 12 9L24 8v15H0z" fill="#1da0ea" /><path d="m0 23 12-9 12 9z" fill="#36b7f5" /><path d="M24 8v15L12 17z" fill="#5acbfb" />
      </App24>
      <App24>
        <path d="m6 1 6 4-6 4-6-4zM18 1l6 4-6 4-6-4zM6 9l6 4-6 4-6-4zM18 9l6 4-6 4-6-4zM12 14l6 4-6 4-6-4z" fill="#050505" />
      </App24>
      <div className="ml-[3px] mt-[4px] flex h-[38px] w-[38px] shrink-0 flex-col items-center rounded-[4px] border border-[#e2d6cd] border-r-[3px] bg-[#f4ece6] pt-[6px]">
        <OfficeIcon size={24} letter="W" color="#2b579a" />
        <div className="mt-[4px] h-[3px] w-[16px] shrink-0 rounded-full bg-[#0c79d8]" />
      </div>
      <div className="ml-[13px] mt-[11px] flex"><OfficeIcon size={24} letter="X" color="#217346" /></div>
      <Svg w={11} h={7} className="ml-[123px] mt-[19px]"><path d="m1 6 4.500-4.500L10 6" stroke="#222" strokeWidth="1.500" /></Svg>
      <Svg w={17} h={17} className="ml-[18px] mt-[15px]">
        <path d="M15 7a7 7 0 1 0-7 8M1 5.500h14M1 10.500h7M8 1C4 5 4 11 7 15M8 1q3 3 3 6" stroke="#222" /><circle cx="12" cy="12" r="4" fill="#ebdbca" stroke="#222" /><path d="m9.500 14.500 5-5" stroke="#222" />
      </Svg>
      <Svg w={16} h={14} className="ml-[7px] mt-[16px]">
        <path d="M.6 5v4h2.500l4 3.500v-11L3.100 5zM9 5q1.500 2 0 4M11 3q3 4 0 8" stroke="#222" /><path d="M13 1q4 6 0 12" stroke="#aaa09a" />
      </Svg>
      <Svg w={17} h={10} className="ml-[8px] mt-[18px]">
        <rect x=".6" y=".6" width="13" height="8.500" rx="1.500" stroke="#222" strokeWidth="1.200" /><path d="M2 2h5v6H2zM14 3.500h2v3h-2z" fill="#222" />
      </Svg>
      <div className="flex w-[78px] shrink-0 flex-col items-end pt-[7px]">
        <T w={29} className="text-[11.500px] leading-[16px] text-[#222]">15:55</T><T w={62} className="text-[11.500px] leading-[16px] text-[#222]">07/01/2024</T>
      </div>
      <Svg w={13} h={15} className="ml-[8px] mt-[16px]"><path d="M6.500 0Q2 0 2 5v4L0 11.500V12h13v-.5L11 9V5q0-5-4.500-5zM4 13q2.500 3 5 0z" fill="#0f4391" /></Svg>
    </div>
  );
}

export default function App() {
  return (
    <div className="flex h-[768px] w-[1366px] flex-col overflow-hidden bg-white font-['Noto_Sans',sans-serif]">
      <div className="relative flex flex-col"><Circuit /><TitleBar /><Tabs /></div>
      <Ribbon />
      <Workspace />
      <StatusBar />
      <Taskbar />
    </div>
  );
}
